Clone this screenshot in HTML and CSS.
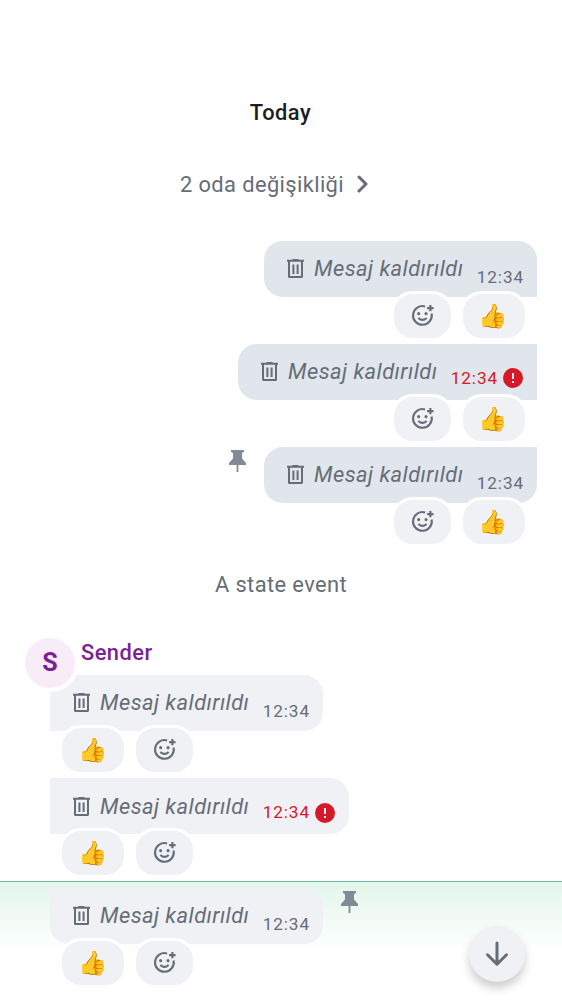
FILE: index.html
```html
<!DOCTYPE html>
<html lang="tr">
<head>
<meta charset="utf-8">
<title>Timeline</title>
<link rel="stylesheet" href="styles.css">
</head>
<body>
<svg class="defs" aria-hidden="true">
  <symbol id="trash" viewBox="0 0 17 19"><path fill-rule="evenodd" d="M5.500 0h6v.7H17v2h-1v14.800q0 1.500-1.500 1.500h-12Q1 19 1 17.500V2.700H0v-2h5.500zM3 2.700V17h11V2.700zM5.400 5.500h2v9.500h-2zm4.200 0h2v9.500h-2z"/></symbol>
  <symbol id="pin" viewBox="0 0 17 22"><path d="M2 0h13v2q-2 0-2 2v4.500l4 4.500v2H9.400v7H7.600v-7H0v-2l4-4.500V4q0-2-2-2z"/></symbol>
  <symbol id="react" viewBox="0 0 24 24"><path d="M14.500 3.300A9 9 0 1 0 20.700 10" fill="none" stroke="currentColor" stroke-width="2"/><path d="M8 14.300q4 3.700 8 0" fill="none" stroke="currentColor" stroke-width="2"/><circle cx="8.300" cy="10.200" r="1.500"/><circle cx="15.400" cy="10.200" r="1.500"/><path d="M18.500 1.800h2.100v2.100h2v2.100h-2v2h-2.100V6h-2.100V3.900h2.100z"/></symbol>
  <symbol id="error" viewBox="0 0 20 20"><path fill-rule="evenodd" d="M10 0a10 10 0 1 0 0 20a10 10 0 0 0 0-20M9 5h2v6H9zm0 8h2v2H9z"/></symbol>
</svg>
<main class="timeline">
  <h1 class="day">Today</h1>
  <button class="changes">2 oda değişikliği <svg class="chevron" viewBox="0 0 12 18"><path d="M2 2l7 7-7 7"/></svg></button>

  <section class="outgoing">
    <article class="message">
      <div class="line"><div class="bubble first"><svg class="trash"><use href="#trash"/></svg><em>Mesaj kaldırıldı</em><time>12:34</time></div></div>
      <div class="reactions"><span class="pill add"><svg><use href="#react"/></svg></span><span class="pill thumb">👍</span></div>
    </article>
    <article class="message">
      <div class="line"><div class="bubble middle failed"><svg class="trash"><use href="#trash"/></svg><em>Mesaj kaldırıldı</em><time>12:34</time><svg class="error"><use href="#error"/></svg></div></div>
      <div class="reactions"><span class="pill add"><svg><use href="#react"/></svg></span><span class="pill thumb">👍</span></div>
    </article>
    <article class="message">
      <div class="line"><svg class="pin"><use href="#pin"/></svg><div class="bubble last"><svg class="trash"><use href="#trash"/></svg><em>Mesaj kaldırıldı</em><time>12:34</time></div></div>
      <div class="reactions"><span class="pill add"><svg><use href="#react"/></svg></span><span class="pill thumb">👍</span></div>
    </article>
  </section>

  <p class="state">A state event</p>

  <section class="incoming">
    <header class="sender"><span class="avatar">S</span><span class="name">Sender</span></header>
    <article class="message">
      <div class="line"><div class="bubble first"><svg class="trash"><use href="#trash"/></svg><em>Mesaj kaldırıldı</em><time>12:34</time></div></div>
      <div class="reactions"><span class="pill thumb">👍</span><span class="pill add"><svg><use href="#react"/></svg></span></div>
    </article>
    <article class="message">
      <div class="line"><div class="bubble middle failed"><svg class="trash"><use href="#trash"/></svg><em>Mesaj kaldırıldı</em><time>12:34</time><svg class="error"><use href="#error"/></svg></div></div>
      <div class="reactions"><span class="pill thumb">👍</span><span class="pill add"><svg><use href="#react"/></svg></span></div>
    </article>
    <article class="message highlighted">
      <div class="line"><div class="bubble last"><svg class="trash"><use href="#trash"/></svg><em>Mesaj kaldırıldı</em><time>12:34</time></div><svg class="pin"><use href="#pin"/></svg></div>
      <div class="reactions"><span class="pill thumb">👍</span><span class="pill add"><svg><use href="#react"/></svg></span></div>
    </article>
  </section>
</main>
<button class="jump" aria-label="Jump to bottom"><svg viewBox="0 0 24 26"><path d="M12 2v21M2.500 13.800l9.500 9.500 9.500-9.500"/></svg></button>
</body>
</html>
```
FILE: styles.css
```css
* { box-sizing: border-box; }
body { margin: 0; width: 562px; height: 1000px; overflow: hidden; position: relative; background: #fff; color: #656d77; font-family: Roboto, sans-serif; font-size: 21.875px; letter-spacing: .78px; }
svg { display: block; flex: none; fill: currentColor; }
button { font: inherit; letter-spacing: inherit; color: inherit; border: 0; background: none; padding: 0; }
.defs { width: 0; height: 0; position: absolute; }
.timeline { display: flex; flex-direction: column; padding-top: 97px; }
.day { margin: 0 1px 0 0; text-align: center; color: #1b1d22; font-size: 21.875px; font-weight: 500; line-height: 31px; letter-spacing: .5px; }
.changes { display: flex; align-items: center; gap: 13px; align-self: center; margin: 41px 13px 0 0; line-height: 31px; letter-spacing: .4px; }
.chevron { width: 12px; height: 18px; fill: none; stroke: currentColor; stroke-width: 3; stroke-linecap: round; stroke-linejoin: round; }
.changes .chevron { margin-bottom: 1px; }
.outgoing { margin-top: 40.600px; padding-right: 25px; }
.message { height: 103.125px; }
.line { display: flex; }
.bubble { display: flex; align-items: center; height: 56.250px; padding: 0 13px 0 23px; border-radius: 18.750px; background: #e1e6ec; }
.trash { width: 17px; height: 19px; margin-right: 10px; }
em { line-height: 31px; white-space: nowrap; letter-spacing: .45px; }
time { margin: 17px 0 0 13.400px; font-size: 17.188px; line-height: 25px; letter-spacing: .9px; }
.failed time, .error { color: #d51928; }
.failed time { margin-top: 13px; }
.error { width: 20px; height: 20px; margin: 13px 1px 0 5px; }
.pin { width: 17px; height: 22px; color: #818a95; }
.outgoing .line { justify-content: flex-end; }
.outgoing .pin { margin: 3px 18px 0 0; }
.outgoing .first { border-bottom-right-radius: 0; }
.outgoing .middle { border-top-right-radius: 0; border-bottom-right-radius: 0; }
.outgoing .last { border-top-right-radius: 0; }
.reactions { display: flex; gap: 6px; margin-top: -6.250px; position: relative; }
.outgoing .reactions { justify-content: flex-end; padding-right: 9.400px; }
.pill { display: flex; align-items: center; justify-content: center; height: 50px; border: 3px solid #fff; border-radius: 22px; background: #f0f1f5; }
.add { width: 62.500px; }
.add svg { width: 25px; height: 25px; }
.thumb { width: 68px; padding-right: 1px; font-family: "Noto Color Emoji", sans-serif; font-size: 23.438px; letter-spacing: 0; }
.state { margin: 19px 0 0; text-align: center; line-height: 31px; letter-spacing: .4px; }
.incoming { padding-left: 50px; }
.sender { display: flex; height: 41px; margin: 33.800px 0 0 -29px; position: relative; z-index: 1; }
.avatar { display: grid; place-items: center; flex: none; width: 58px; height: 58px; border: 4px solid #fff; border-radius: 50%; background: #f9ecf9; color: #7d1f97; font-size: 25px; font-weight: 700; letter-spacing: 0; }
.name { margin: 3.500px 0 0 2px; color: #7d1f97; font-weight: 500; line-height: 31px; letter-spacing: .45px; }
.incoming .bubble { background: #f0f1f5; }
.incoming .first { border-top-left-radius: 0; border-bottom-left-radius: 0; }
.incoming .middle { border-top-left-radius: 0; border-bottom-left-radius: 0; }
.incoming .last { border-top-left-radius: 0; }
.incoming .reactions { padding-left: 9.400px; }
.incoming .pin { margin: 3px 0 0 18px; }
.highlighted { margin-left: -50px; padding: 5.500px 0 0 50px; height: 119px; border-top: 1px solid #72b7a0; background: linear-gradient(#e2f6eb, #fff 70px); }
.jump { position: absolute; left: 468.500px; top: 925.500px; width: 56.250px; height: 56.250px; display: grid; place-items: center; border-radius: 50%; background: #f0f1f5; box-shadow: 0 6px 10px #0003; }
.jump svg { width: 24px; height: 26px; fill: none; stroke: currentColor; stroke-width: 3; stroke-linecap: round; stroke-linejoin: round; }
```
